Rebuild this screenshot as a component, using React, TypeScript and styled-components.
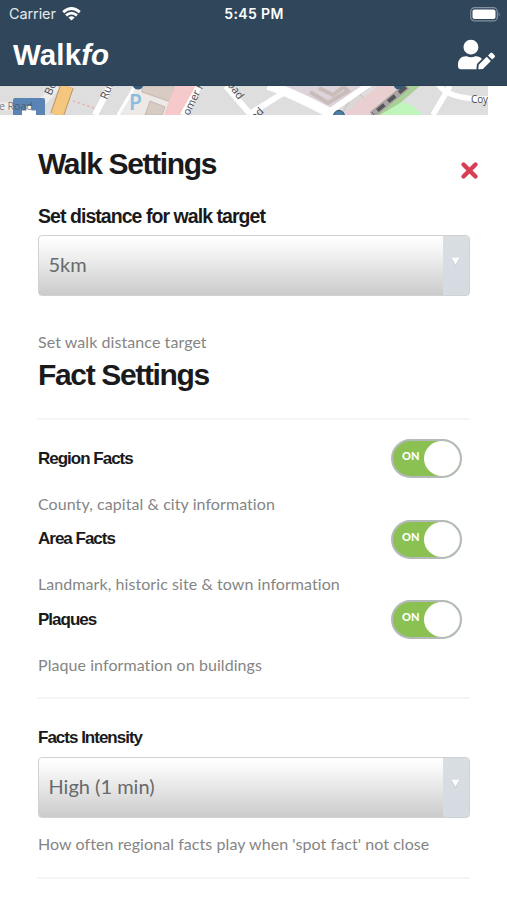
import React, { useState } from "react";
import styled, { createGlobalStyle } from "styled-components";
import { FaUserEdit } from "react-icons/fa";

const GlobalStyle = createGlobalStyle`
  *, *::before, *::after { box-sizing: border-box; }
  body { margin: 0; background: #fff; overflow: hidden; }
`;

const Screen = styled.main`
  display: flex;
  flex-direction: column;
  width: 507px;
  height: 900px;
  overflow: hidden;
  background: #fff;
  font-family: Lato, sans-serif;
`;

const Header = styled.header`
  height: 86px;
  flex: none;
  background: #30475b;
  color: #fff;
  border-bottom: 1px solid #2a4054;
`;

const StatusBar = styled.div`
  display: grid;
  grid-template-columns: 1fr auto 1fr;
  align-items: center;
  height: 28px;
  padding: 0 6px 0 9px;
  font-family: Inter, sans-serif;
  font-size: 14.5px;
  line-height: 28px;
`;

const Carrier = styled.span`
  display: flex;
  align-items: center;
  gap: 6px;
  color: #e4e9ed;
  letter-spacing: -0.1px;
`;

const Clock = styled.time`
  margin-left: -2px;
  font-weight: 600;
  font-size: 14px;
  letter-spacing: 0.35px;
`;

const BatterySlot = styled.span`
  display: flex;
  justify-content: flex-end;
`;

const NavBar = styled.div`
  display: flex;
  align-items: center;
  justify-content: space-between;
  height: 56px;
  padding: 0 12px 2px 13px;
`;

const Brand = styled.h1`
  margin: 0;
  font: bold 29.5px/40px "Liberation Sans", sans-serif;
  letter-spacing: 0.1px;
`;

const IconButton = styled.button`
  display: flex;
  padding: 0;
  border: 0;
  background: none;
  color: inherit;
`;

const ProfileButton = styled(IconButton)`
  margin-bottom: 2px;
`;

const MapStrip = styled.svg`
  display: block;
  flex: none;
`;

const Panel = styled.section`
  display: flex;
  flex-direction: column;
  padding: 29px 37px 0 38px;
`;

const TitleRow = styled.div`
  display: flex;
  justify-content: space-between;
  height: 60px;
  margin-right: -9px;
`;

const Title = styled.h2`
  margin: 0;
  color: #1a1a1c;
  font: bold 30px/40px "Liberation Sans", sans-serif;
  letter-spacing: -1.35px;
  white-space: nowrap;
`;

const CloseButton = styled(IconButton)`
  height: 20px;
  margin-top: 17px;
`;

const Label = styled.h3<{ $large?: boolean }>`
  margin: 0;
  color: #1a1a1c;
  font: bold ${(p) => (p.$large ? "19.5px" : "17px")}/24px "Liberation Sans", sans-serif;
  letter-spacing: ${(p) => (p.$large ? "-0.95px" : "-1px")};
  white-space: nowrap;
`;

const FieldLabel = styled(Label)`
  margin-bottom: 7px;
`;

const Note = styled.p`
  margin: 0;
  color: #858585;
  font-size: 16px;
  line-height: 24px;
  letter-spacing: 0.07px;
  white-space: nowrap;
`;

const SelectBox = styled.button`
  display: flex;
  width: 432px;
  height: 61px;
  padding: 0;
  overflow: hidden;
  border: 1px solid #cfd1d3;
  border-radius: 4px;
  background: linear-gradient(#fff 3%, #f6f6f6 22%, #ccc 98%);
  color: #67696c;
  font: 20px/56px Lato, sans-serif;
  text-align: left;
`;

const SelectValue = styled.span`
  flex: 1;
  padding-left: 9.5px;
  letter-spacing: 0;
`;

const SelectArrow = styled.span`
  display: flex;
  justify-content: center;
  width: 26px;
  height: 100%;
  padding: 21px 1px 0 0;
  background: linear-gradient(#d9dee2, #d4dbe1);
`;

const Divider = styled.hr<{ $above: number; $below: number }>`
  width: 433px;
  height: 2px;
  margin: ${(p) => p.$above}px 0 ${(p) => p.$below}px -1px;
  border: 0;
  background: #f5f5f5;
`;

const DistanceNote = styled(Note)`
  margin: 34px 0 1px;
`;

const IntensityNote = styled(Note)`
  margin-top: 14px;
`;

const FactRow = styled.div`
  display: flex;
  justify-content: space-between;
  height: 80.7px;
  padding-right: 8px;
`;

const FactText = styled.div`
  display: flex;
  flex-direction: column;
  gap: 21px;
  padding-top: 7.5px;
`;

const Toggle = styled.button<{ $on: boolean }>`
  display: flex;
  flex-direction: ${(p) => (p.$on ? "row" : "row-reverse")};
  align-items: center;
  justify-content: space-between;
  width: 71px;
  height: 39px;
  padding: 0 0 0 9px;
  border: 2px solid #b4b9b9;
  border-radius: 20px;
  background: ${(p) => (p.$on ? "#8bc152" : "#ddd")};
  color: #fff;
  font: 900 11px/14px Lato, sans-serif;
`;

const ToggleText = styled.span`
  padding-bottom: 5px;
  letter-spacing: 0.1px;
`;

const Knob = styled.span`
  width: 36px;
  height: 35px;
  border-radius: 50%;
  background: #fff;
`;

function WifiIcon() {
  return (
    <svg width="19" height="14" viewBox="0 0 19 14" fill="none" stroke="#fff" strokeWidth="2.8">
      <path d="M1.2 5.1Q9.5-2.1 17.8 5.1" />
      <path d="M4 8.4Q9.5 3.9 15 8.4" />
      <path d="M6.4 10.5Q9.5 8.2 12.6 10.5L9.5 13.6Z" fill="#fff" stroke="none" />
    </svg>
  );
}

function BatteryIcon() {
  return (
    <svg width="31" height="15" viewBox="0 0 31 15">
      <rect x="0.7" y="0.7" width="26.6" height="13.2" rx="4" fill="none" stroke="#8290a0" strokeWidth="1.2" />
      <rect x="2.5" y="2.5" width="23" height="9.6" rx="2" fill="#fff" />
      <path d="M28.7 5q2 2.3 0 4.6z" fill="#8290a0" />
    </svg>
  );
}

function CrossIcon() {
  return (
    <svg width="19" height="19" viewBox="0 0 19 19" stroke="#d63e55" strokeWidth="4.4" strokeLinecap="round">
      <path d="M3.5 3.5L15.5 15.5M15.5 3.5L3.5 15.5" />
    </svg>
  );
}

function StreetMap() {
  return (
    <MapStrip width="488" height="29" viewBox="0 0 488 29" fontFamily="Open Sans, sans-serif">
      <rect width="488" height="29" fill="#dfdedf" />
      <path d="M134 0L117 29H164L174 0Z" fill="#ece9e7" />
      <path d="M142 0H174V17L142 6ZM150 15L165 21L162 29H145Z" fill="#d8cbc4" stroke="#c6b8b1" />
      <path d="M175 0H197L179 29H164Z" fill="#f6caca" />
      <path d="M0 20Q38 24 50 8L56 0" fill="none" stroke="#efedec" strokeWidth="8" />
      <path d="M67 0L57 29" stroke="#b79863" strokeWidth="14" />
      <path d="M67 0L57 29" stroke="#f5c77e" strokeWidth="12" />
      <path d="M73 15L94 22" stroke="#f0a5a5" strokeWidth="1.5" strokeDasharray="2 3" />
      <path d="M110 0L95 29" stroke="#fff" strokeWidth="6" />
      <path d="M135 0L118 29" stroke="#fff" strokeWidth="3" />
      <path d="M199 0L183 29M226 0L251 29M285 6L248 29" stroke="#fff" strokeWidth="6" />
      <path d="M280 0H373L333 29Z" fill="#ddd3da" />
      <path d="M310 6L328 17L348 5L343 0M319 2L333 9L345 0" fill="none" stroke="#c9bdb9" strokeWidth="4" />
      <path d="M350 14L360 8L367 15L350 29H341Z" fill="#dcd7d7" stroke="#c9bcbc" />
      <path d="M378 0H402L370 29H343Z" fill="#e9cfd0" />
      <path d="M268 -1Q290 6 330 27L340 33" fill="none" stroke="#fff" strokeWidth="10" />
      <path d="M371 -3L329 26" stroke="#fff" strokeWidth="6" />
      <path d="M405 0H420L386 29H370Z" fill="#a9cf97" />
      <path d="M410 18L423 29H380L402 16Z" fill="#bff5bb" />
      <path d="M407 0L372 29" stroke="#aaa5a5" strokeWidth="7" />
      <path d="M406 1L373 28" stroke="#55555a" strokeWidth="4" strokeDasharray="9 5" />
      <path d="M438 -2Q449 14 488 13M450 0L433 29" fill="none" stroke="#fff" strokeWidth="5.5" />
      <circle cx="138" cy="-2" r="5.5" fill="#355b7b" />
      <circle cx="399" cy="-2" r="5.5" fill="#355b7b" />
      <circle cx="339" cy="30" r="5.5" fill="#4b7fa7" stroke="#294b68" />
      <rect x="13" y="12" width="32" height="20" rx="2" fill="#5a84b4" />
      <path d="M22 27H36M29 20V29" stroke="#fff" strokeWidth="5" />
      <g fill="#4a4a50" fontSize="11">
        <text x="-1" y="24" fontSize="10.5" opacity=".7">e Road</text>
        <text transform="translate(51 10) rotate(-65)">Bo</text>
        <text transform="translate(107 14) rotate(-68)">Rur</text>
        <text transform="translate(189 30) rotate(-64)" fontSize="10.5">omer R</text>
        <text transform="translate(223 -7) rotate(54)">Road</text>
        <text transform="translate(255 35) rotate(-43)">ad</text>
        <text x="471" y="17" fontSize="10" textLength="17">Coy</text>
      </g>
      <text x="129" y="24" fill="#88bddd" fontSize="21" fontWeight="600">P</text>
    </MapStrip>
  );
}

function Select({ value }: { value: string }) {
  return (
    <SelectBox>
      <SelectValue>{value}</SelectValue>
      <SelectArrow>
        <svg width="9" height="9" viewBox="0 0 9 9">
          <path d="M.5 1.7H8.5L4.5 9Z" fill="#b9bfc4" />
          <path d="M.5.7H8.5L4.5 8Z" fill="#fff" />
        </svg>
      </SelectArrow>
    </SelectBox>
  );
}

function Fact({ name, note }: { name: string; note: string }) {
  const [on, setOn] = useState(true);
  return (
    <FactRow>
      <FactText>
        <Label>{name}</Label>
        <Note>{note}</Note>
      </FactText>
      <Toggle $on={on} onClick={() => setOn(!on)} aria-pressed={on}>
        <ToggleText>{on ? "ON" : "OFF"}</ToggleText>
        <Knob />
      </Toggle>
    </FactRow>
  );
}

export default function App() {
  return (
    <Screen>
      <GlobalStyle />
      <Header>
        <StatusBar>
          <Carrier>Carrier <WifiIcon /></Carrier>
          <Clock>5:45 PM</Clock>
          <BatterySlot><BatteryIcon /></BatterySlot>
        </StatusBar>
        <NavBar>
          <Brand>Walk<em>fo</em></Brand>
          <ProfileButton aria-label="Edit profile"><FaUserEdit size={37} /></ProfileButton>
        </NavBar>
      </Header>
      <StreetMap />
      <Panel>
        <TitleRow>
          <Title>Walk Settings</Title>
          <CloseButton aria-label="Close"><CrossIcon /></CloseButton>
        </TitleRow>
        <FieldLabel $large>Set distance for walk target</FieldLabel>
        <Select value="5km" />
        <DistanceNote>Set walk distance target</DistanceNote>
        <Title>Fact Settings</Title>
        <Divider $above={23} $below={19} />
        <Fact name="Region Facts" note="County, capital & city information" />
        <Fact name="Area Facts" note="Landmark, historic site & town information" />
        <Fact name="Plaques" note="Plaque information on buildings" />
        <Divider $above={16} $below={27} />
        <FieldLabel>Facts Intensity</FieldLabel>
        <Select value="High (1 min)" />
        <IntensityNote>How often regional facts play when 'spot fact' not close</IntensityNote>
        <Divider $above={21} $below={0} />
      </Panel>
    </Screen>
  );
}
